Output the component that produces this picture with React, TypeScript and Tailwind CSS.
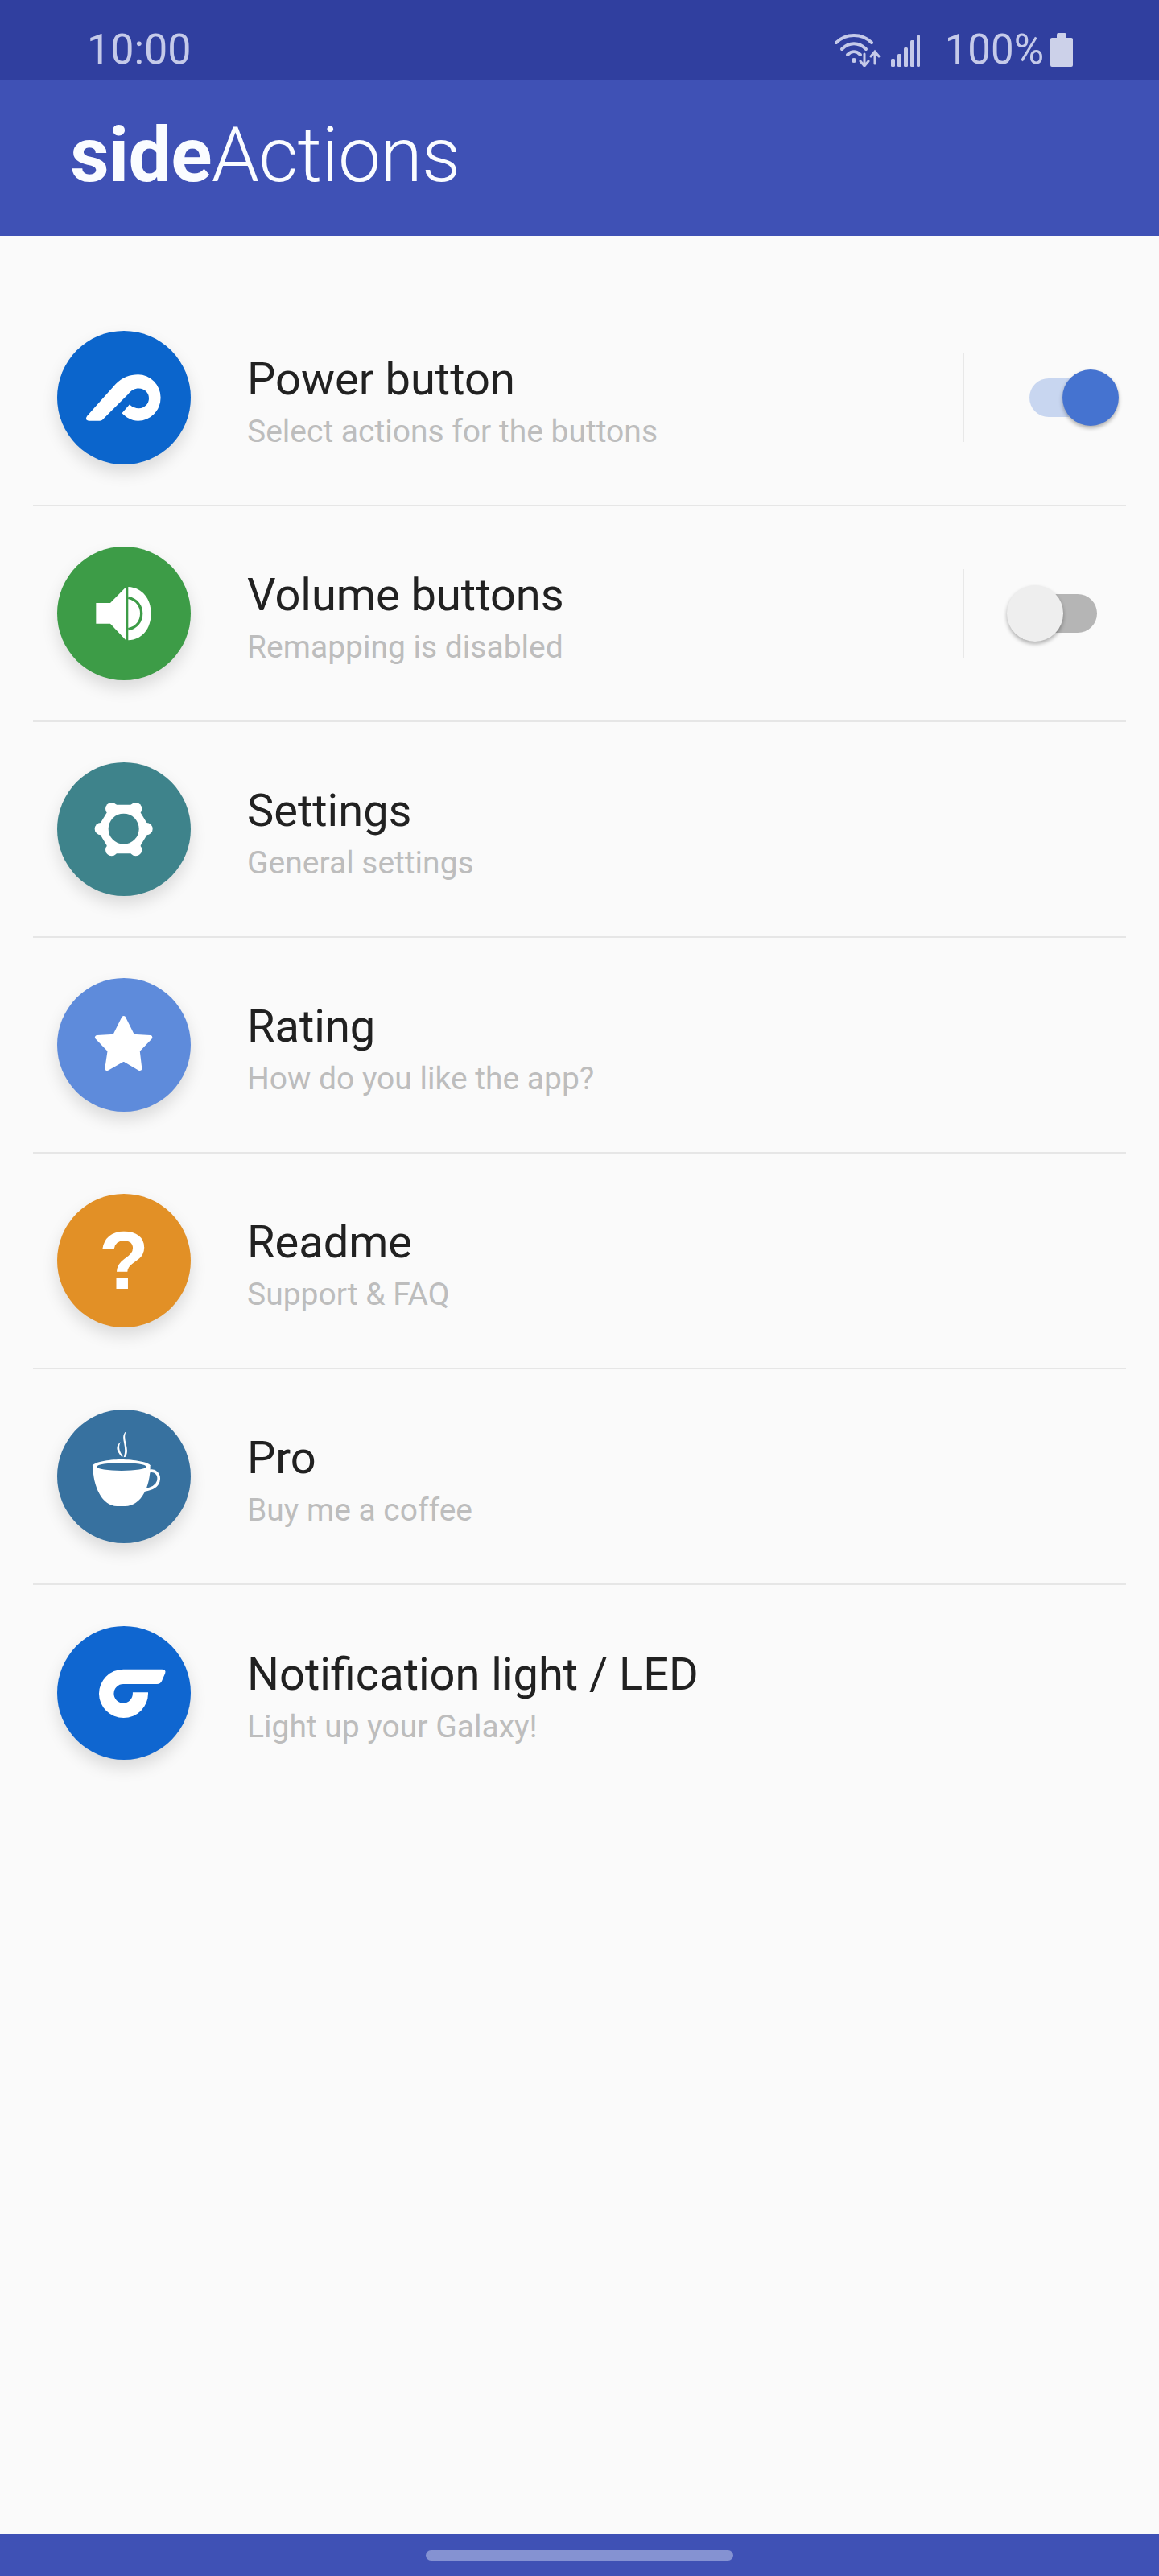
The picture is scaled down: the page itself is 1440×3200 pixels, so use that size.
import type { ReactNode } from "react";

const WHITE = "#fff";

function PowerIcon() {
  return (
    <svg viewBox="125 95 495 495" className="w-full h-full">
      <path
        fill={WHITE}
        d="M236 410 L342 292 C365 268 395 257 425 257 A83 85 0 0 1 425 428 C400 428 380 415 365 400 L393 368 C405 378 415 382 428 382 A37 37 0 0 0 428 308 C410 308 400 315 388 330 L292 425 Q288 428 282 428 L242 428 Q226 425 236 410 Z"
      />
    </svg>
  );
}

function VolumeIcon() {
  return (
    <svg viewBox="122 88 498 498" className="w-full h-full">
      <path fill={WHITE} d="M267 298 H320 L377 240 V435 L320 375 H267 Z" />
      <path fill={WHITE} d="M387 238 C440 240 472 285 472 337 C472 392 440 435 387 437 Z" />
      <path fill="none" stroke="#3d9c47" strokeWidth="10" d="M387 278 C420 285 436 310 436 337 C436 365 420 390 387 396" />
    </svg>
  );
}

function GearIcon() {
  const lobes = [
    [325, 255],
    [415, 255],
    [285, 330],
    [455, 330],
    [325, 408],
    [415, 408],
  ];
  return (
    <svg viewBox="122 82 498 498" className="w-full h-full">
      <polygon fill={WHITE} points="325,240 415,240 470,330 415,422 325,422 270,330" />
      {lobes.map(([cx, cy]) => (
        <circle key={`${cx}-${cy}`} cx={cx} cy={cy} r="23" fill={WHITE} />
      ))}
      <circle cx="370" cy="330" r="57" fill="#3e838b" />
    </svg>
  );
}

function StarIcon() {
  return (
    <svg viewBox="122 75 498 498" className="w-full h-full">
      <polygon
        fill={WHITE}
        stroke={WHITE}
        strokeWidth="16"
        strokeLinejoin="round"
        points="370,224 404,292 469,296 422,345 430,412 370,377 308,412 318,345 271,296 336,292"
      />
    </svg>
  );
}

function CupIcon() {
  return (
    <svg viewBox="122 62 498 498" className="w-full h-full">
      <path
        fill="none"
        stroke={WHITE}
        strokeWidth="11"
        d="M460 294 C488 282 506 305 499 330 C493 350 475 358 448 362"
      />
      <path
        fill={WHITE}
        d="M255 270 C262 258 310 248 360 248 C410 248 462 258 469 270 C470 350 435 422 375 422 H345 C290 422 255 350 255 270 Z"
      />
      <ellipse cx="362" cy="275" rx="92" ry="15" fill="#37719f" />
      {/* steam */}
      <path fill={WHITE} d="M380 142 C352 165 386 195 370 240 L377 238 C396 205 362 175 380 142 Z" />
      <path fill={WHITE} d="M358 183 C332 205 352 225 364 240 L367 236 C356 220 348 205 358 183 Z" />
    </svg>
  );
}

function LedIcon() {
  return (
    <svg viewBox="125 90 495 495" className="w-full h-full">
      <path
        fill={WHITE}
        d="M370 250 H513 Q530 250 525 265 L513 293 Q508 305 495 305 H370 A35 35 0 1 0 405 340 V335 H462 V340 A91 90 0 1 1 370 250 Z"
      />
    </svg>
  );
}

function Switch({ on }: { on: boolean }) {
  return (
    <div className="relative w-[139px] h-[70px] flex items-center justify-center">
      <div className={`w-[84px] h-[48px] rounded-full ${on ? "bg-[#c8d6f0]" : "bg-[#b5b5b5]"}`} />
      <div
        className={`absolute top-0 w-[70px] h-[70px] rounded-full shadow-[0_3px_5px_rgba(0,0,0,0.3)] ${
          on ? "right-0 bg-[#4573d0]" : "left-0 bg-[#eeeeee]"
        }`}
      />
    </div>
  );
}

type MenuRow = {
  title: string;
  subtitle: string;
  color: string;
  icon: ReactNode;
  toggle?: boolean;
};

const rows: MenuRow[] = [
  { title: "Power button", subtitle: "Select actions for the buttons", color: "bg-[#0b65cc]", icon: <PowerIcon />, toggle: true },
  { title: "Volume buttons", subtitle: "Remapping is disabled", color: "bg-[#3d9c47]", icon: <VolumeIcon />, toggle: false },
  {
    title: "Settings",
    subtitle: "General settings",
    color: "bg-[#3e838b]",
    icon: <GearIcon />,
  },
  {
    title: "Rating",
    subtitle: "How do you like the app?",
    color: "bg-[#5e8bdb]",
    icon: <StarIcon />,
  },
  {
    title: "Readme",
    subtitle: "Support & FAQ",
    color: "bg-[#e29026]",
    icon: <span className="font-['Liberation_Sans'] font-bold text-[102px] leading-none text-white">?</span>,
  },
  { title: "Pro", subtitle: "Buy me a coffee", color: "bg-[#37719f]", icon: <CupIcon /> },
  { title: "Notification light / LED", subtitle: "Light up your Galaxy!", color: "bg-[#0f66d0]", icon: <LedIcon /> },
];

function StatusBar() {
  return (
    <div className="h-[99px] shrink-0 bg-[#303f9f] pl-[108px] pr-[107px] pt-[33px] flex flex-row items-start justify-between text-[52px] leading-[58px] text-[#c5cae9]">
      <span>10:00</span>
      <div className="flex flex-row items-center">
        <svg viewBox="0 0 58 42" className="w-[58px] h-[42px] mr-[12px]" fill="none" stroke="#c5cae9" strokeWidth="4" strokeLinecap="round">
          <path d="M2 12 C14 0 34 0 46 12" />
          <path d="M9 20 C18 11 30 11 39 20" />
          <path d="M16 27 C21 22 27 22 32 27" />
          <circle cx="24" cy="34" r="3" fill="#c5cae9" stroke="none" />
          <path strokeWidth="3" d="M37 26 V40 M32 35 L37 41 L42 35" />
          <path strokeWidth="3" d="M50 38 V24 M45 29 L50 23 L55 29" />
        </svg>
        <svg viewBox="0 0 36 42" className="w-[36px] h-[42px] mr-[31px]" fill="#c5cae9">
          <rect x="0" y="32" width="5" height="10" rx="1.5" />
          <rect x="8" y="26" width="5" height="16" rx="1.5" />
          <rect x="16" y="18" width="5" height="24" rx="1.5" />
          <rect x="24" y="9" width="5" height="33" rx="1.5" />
          <rect x="32" y="2" width="4" height="40" rx="1.5" />
        </svg>
        <span className="text-[51px]">100%</span>
        <svg viewBox="0 0 28 42" className="w-[28px] h-[42px] ml-[8px]" fill="#ccd1e9">
          <path d="M8 2 Q8 0 10 0 H18 Q20 0 20 2 V6 H26 Q28 6 28 8 V40 Q28 42 26 42 H2 Q0 42 0 40 V8 Q0 6 2 6 H8 Z" />
        </svg>
      </div>
    </div>
  );
}

export default function App() {
  return (
    <div className="h-[3200px] flex flex-col bg-[#fafafa] font-['Roboto',sans-serif]">
      <StatusBar />
      <header className="h-[194px] shrink-0 bg-[#3f51b5] pl-[87px] pb-[8px] flex flex-row items-center text-[95px] leading-none text-[#fafcff] tracking-[-0.75px]">
        <span className="font-bold">side</span>
        <span className="font-light">Actions</span>
      </header>
      <main className="flex-1 pt-[68px] px-[41px]">
        {rows.map((row, i) => (
          <div
            key={row.title}
            className={`h-[268px] pl-[30px] pr-[9px] flex flex-row items-center ${
              i < rows.length - 1 ? "border-b-2 border-[#e6e6e6]" : ""
            }`}
          >
            <div
              className={`w-[166px] h-[166px] shrink-0 rounded-full flex items-center justify-center shadow-[0_10px_20px_rgba(0,0,0,0.13)] ${row.color}`}
            >
              {row.icon}
            </div>
            <div className="ml-[70px] flex flex-col">
              <span className="text-[56px] leading-[84px] text-[#212121]">{row.title}</span>
              <span className="text-[39px] leading-[46px] text-[#bdbdbd]">{row.subtitle}</span>
            </div>
            {row.toggle !== undefined && (
              <div className="ml-auto flex flex-row items-center gap-[53px]">
                <div className="w-[2px] h-[110px] bg-[#e8e8e8]" />
                <Switch on={row.toggle} />
              </div>
            )}
          </div>
        ))}
      </main>
      <footer className="h-[52px] shrink-0 bg-[#3f51b5] flex items-center justify-center">
        <div className="w-[382px] h-[13px] rounded-full bg-[#8592d2]" />
      </footer>
    </div>
  );
}
